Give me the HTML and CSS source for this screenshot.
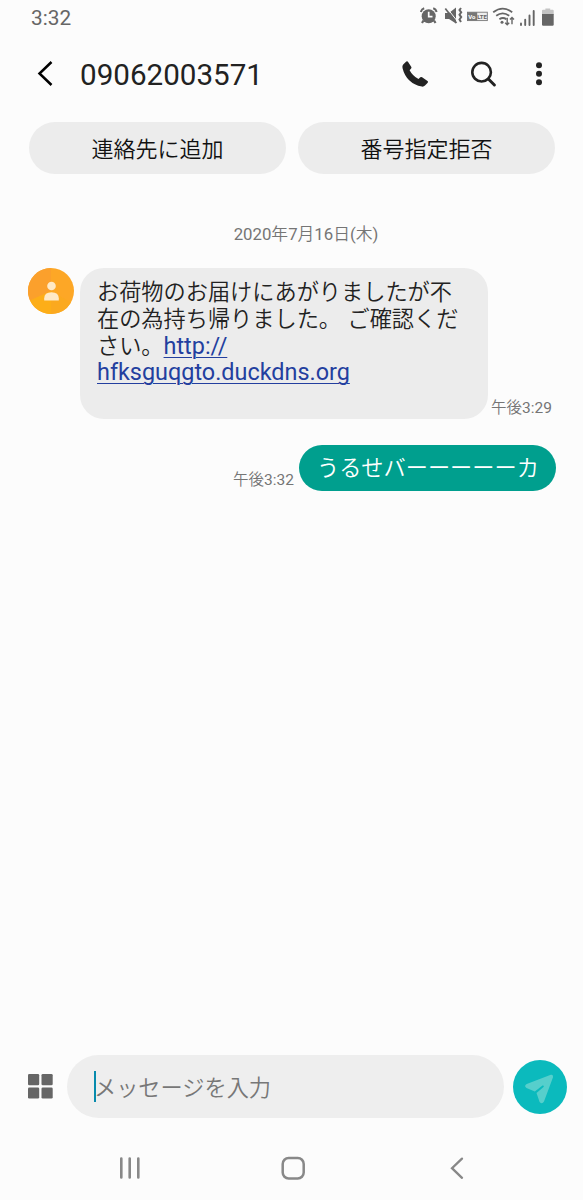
FILE: index.html
```html
<!DOCTYPE html>
<html lang="ja">
<head>
<meta charset="utf-8">
<title>メッセージ</title>
<link rel="stylesheet" href="styles.css">
</head>
<body>
<div class="screen">
  <div class="status">
    <span class="clock">3:32</span>
    <svg class="status-icons" viewBox="0 0 140 24" width="140" height="24">
      <circle cx="8.700" cy="13.200" r="7" fill="#666"/>
      <path d="M3.500 17.500 2 20M14 17.500l1.500 2.500" stroke="#666" stroke-width="2.200"/>
      <path d="M.8 9Q1.500 6 4.200 5.200M13.200 5.200q2.700.8 3.400 3.800" fill="none" stroke="#666" stroke-width="2"/>
      <path d="M8.700 8.800v4.800h3.800" fill="none" stroke="#fcfcfc" stroke-width="1.700"/>
      <path d="M25 10h4l7-5.500V20.500L29 16h-4z" fill="#666"/>
      <path d="M26.500 4.500 38 19" stroke="#fcfcfc" stroke-width="1"/>
      <path d="M25.300 5.500 36.500 20" stroke="#666" stroke-width="1.700"/>
      <path d="m41 5-1.500 2 1.700 2.300-1.700 2.400 1.700 2.400-1.700 2.400 1.500 2.500" fill="none" stroke="#666" stroke-width="2"/>
      <rect x="47.500" y="9.200" width="19.800" height="8.400" fill="#eee" stroke="#777" stroke-width=".9"/>
      <rect x="47.500" y="9.200" width="9.700" height="8.400" fill="#777"/>
      <text class="volte" x="48.200" y="15.800" fill="#fff">Vo</text>
      <text class="volte" x="57.200" y="15.800" fill="#666">LTE</text>
      <path d="M73.200 9.300q9.500-7.300 19 0M76.200 12.800q6.500-5 13 0M79.400 16.300q3.500-2.600 7 0" fill="none" stroke="#666" stroke-width="1.800"/>
      <circle cx="82" cy="19.300" r="1.500" fill="#666"/>
      <path d="M87.200 14.700v7M85.200 19.700l2 2 2-2M92 21.200v-6.500M90 16.400l2-2 2 2" fill="none" stroke="#666" stroke-width="1.400"/>
      <path d="M101 20.500v1.500M105.200 16.800v5.200M109.500 12.500v9.500M113.700 8v14" stroke="#666" stroke-width="1.900" stroke-linecap="round"/>
      <path d="M122 12V7.700q0-1 1-1h2.400V5.500h4.800v1.200h2.500q1 0 1 1V12z" fill="#c4c4c4"/>
      <path d="M122 11h11.700v10.500q0 1.200-1.200 1.200h-9.300q-1.200 0-1.200-1.200z" fill="#666"/>
    </svg>
  </div>
  <header class="bar">
    <svg class="back" viewBox="0 0 24 32" width="24" height="32"><path d="M18.500 4 6.500 15.500l12 11.500" fill="none" stroke="#000" stroke-width="2.500"/></svg>
    <h1 class="number">09062003571</h1>
    <svg class="call" viewBox="0 0 28 28" width="28" height="28"><path d="M2.200 4.500 5.300 1.600Q6.300.9 7.100 1.900L10.200 6.800q.7.900-.1 1.700L8.600 10.200q3 5.600 8.900 8.900l1.800-1.800q.9-.7 1.800 0l5.400 3.600q1 .8.200 1.800l-2.700 2.900q-1.200 1.200-3 1Q5.300 23.500 1.500 8q-.5-2.200.7-3.500z" fill="#222"/></svg>
    <svg class="search" viewBox="0 0 28 28" width="28" height="28"><circle cx="12.600" cy="12.200" r="9.300" fill="none" stroke="#222" stroke-width="2.600"/><path d="m19.400 19 6 6" stroke="#222" stroke-width="3" stroke-linecap="round"/></svg>
    <svg class="more" viewBox="0 0 8 28" width="8" height="28"><g fill="#222"><circle cx="4" cy="5.300" r="3"/><circle cx="4" cy="13.700" r="3"/><circle cx="4" cy="22.300" r="3"/></g></svg>
  </header>
  <div class="actions">
    <button class="action">連絡先に追加</button>
    <button class="action">番号指定拒否</button>
  </div>
  <main class="thread">
    <div class="date">2020年7月16日(木)</div>
    <div class="row incoming">
      <svg class="avatar" viewBox="0 0 46 46" width="46" height="46">
        <circle cx="23" cy="23" r="23" fill="#fda726"/>
        <path d="M23 23V0A23 23 0 0 0 2 32.500z" fill="#fba02c"/>
        <path d="M23 23 2 32.500A23 23 0 0 0 23 46z" fill="#fdae18"/>
        <path d="M23 23v23a23 23 0 0 0 20-11.500z" fill="#fba91f"/>
        <g fill="#ffe9c6"><circle cx="23.500" cy="18" r="4.300"/><path d="M16.200 32.500v-2.200q0-6 7.300-6t7.300 6v2.200z"/></g>
      </svg>
      <div class="bubble received">お荷物のお届けにあがりましたが不<br>在の為持ち帰りました。<span class="gap"> </span>ご確認くだ<br>さい。<a class="link">http://<br>hfksguqgto.duckdns.org</a></div>
      <span class="time">午後3:29</span>
    </div>
    <div class="row outgoing">
      <span class="time">午後3:32</span>
      <div class="bubble sent">うるせバーーーーーカ</div>
    </div>
  </main>
  <div class="composer">
    <svg class="apps" viewBox="0 0 25 25" width="25" height="25"><g fill="#666"><rect width="11.200" height="11.200" rx="1.300"/><rect x="13.500" width="11.200" height="11.200" rx="1.300"/><rect y="13.400" width="11.200" height="11.200" rx="1.300"/><rect x="13.500" y="13.400" width="11.200" height="11.200" rx="1.300"/></g></svg>
    <div class="field"><span class="caret"></span><span class="hint">メッセージを入力</span></div>
    <svg class="send" viewBox="0 0 54 54" width="54" height="54"><circle cx="27" cy="27" r="27" fill="#0bbabd"/><path d="M37.800 14.800q2.800-.6 2.200 2.400L31 41.500q-1.900 3.400-4.400.5L23.500 33l7.300-6.300q.2-1.400-1.300-1.100L21.800 31.500 13.500 28q-2.900-1.900.2-3.900z" fill="#56cfcc"/></svg>
  </div>
  <nav class="nav">
    <svg viewBox="0 0 24 24" width="24" height="24"><path d="M4.300 2.500v19M12.700 2.500v19M21.300 2.500v19" stroke="#888" stroke-width="2.600" stroke-linecap="round"/></svg>
    <svg viewBox="0 0 24 24" width="24" height="24"><rect x="1.700" y="2" width="21" height="20.500" rx="6" fill="none" stroke="#888" stroke-width="2.500"/></svg>
    <svg viewBox="0 0 24 24" width="24" height="24"><path d="M17 2.600 7 12.200 17 21.800" fill="none" stroke="#888" stroke-width="2.300" stroke-linecap="round"/></svg>
  </nav>
</div>
</body>
</html>
```
FILE: styles.css
```css
* { box-sizing: border-box; }
body {
  margin: 0;
  background: #fcfcfc;
  font-family: Roboto, "Noto Sans CJK JP DemiLight", "Noto Sans CJK JP", sans-serif;
  color: #222;
}
.screen {
  width: 583px;
  height: 1200px;
  display: flex;
  flex-direction: column;
  overflow: hidden;
}
.status {
  height: 36px;
  display: flex;
  justify-content: space-between;
  padding: 0 23px 0 31px;
}
.clock { font-size: 20.8px; line-height: 36px; color: #666; }
.status-icons { margin-top: 3px; }
.volte { font: bold 6px Roboto, sans-serif; }
.bar {
  height: 76px;
  display: flex;
  align-items: center;
  padding: 0 40px 0 33px;
}
.number {
  margin: 2px auto 0 23px;
  font-size: 29.6px;
  font-weight: 400;
  line-height: 40px;
}
.call { margin-right: 40px; }
.search { margin-right: 38px; }
.actions {
  display: flex;
  gap: 12px;
  padding: 10px 28px 0 29px;
}
.action {
  flex: 1;
  height: 52px;
  padding: 0 0 2px;
  border: 0;
  border-radius: 26px;
  background: #ececec;
  color: #111;
  font: 350 22px "Noto Sans CJK JP DemiLight", "Noto Sans CJK JP", sans-serif;
}
.thread { flex: 1; padding: 49px 27px 0 28px; }
.date {
  text-align: center;
  font-size: 16.8px;
  line-height: 23px;
  padding-bottom: 1px;
  color: #757575;
  margin-left: 28px;
}
.row { display: flex; }
.incoming { margin-top: 21px; }
.outgoing { margin-top: 26px; justify-content: flex-end; }
.bubble { font-weight: 350; white-space: nowrap; }
.received {
  width: 408px;
  height: 151px;
  margin-left: 6px;
  padding: 11px 17px;
  border-radius: 24px;
  background: #ececec;
  font-size: 22.2px;
  line-height: 26.8px;
}
.gap { margin-right: 1px; }
.link {
  color: #233f9f;
  font-size: 23.4px;
  font-weight: 400;
  text-decoration: underline;
  text-decoration-thickness: 1px;
  text-underline-offset: 3px;
}
.time {
  align-self: flex-end;
  font-size: 15.5px;
  line-height: 21px;
  color: #757575;
  margin-left: 3px;
}
.sent {
  width: 257px;
  height: 46px;
  margin-left: 5px;
  padding-left: 18px;
  border-radius: 23px;
  background: #009f8e;
  color: #fff;
  font-size: 22.2px;
  line-height: 47px;
}
.composer {
  height: 63px;
  display: flex;
  align-items: center;
  padding-left: 28px;
}
.field {
  width: 437px;
  height: 63px;
  margin: 0 9px 0 14px;
  padding-left: 27px;
  border-radius: 32px;
  background: #eee;
  display: flex;
  align-items: center;
}
.caret { width: 2px; height: 31px; background: #078bad; }
.hint { color: #777; font-size: 22.2px; font-weight: 350; line-height: 32px; margin: 2px 0 0 -2px; }
.nav {
  height: 82px;
  display: flex;
  align-items: center;
  padding: 18px 0 0 117px;
  gap: 140px;
}
```
